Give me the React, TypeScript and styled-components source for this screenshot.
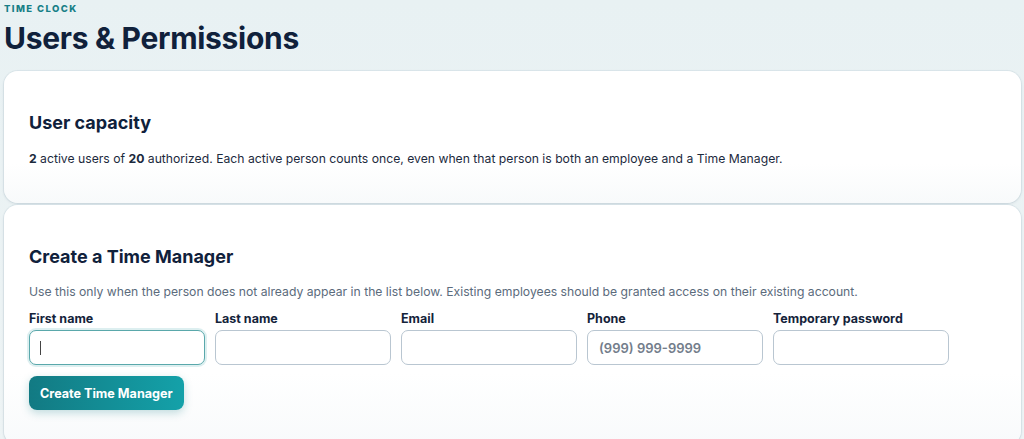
import React from 'react';
import styled, { createGlobalStyle } from 'styled-components';

const GlobalStyle = createGlobalStyle`
  html, body {
    margin: 0;
    padding: 0;
  }
  body {
    font-family: Inter, "Noto Sans", sans-serif;
    background: linear-gradient(180deg, #e8f1f3 0%, #eef4f5 100%);
    color: #0f1f3a;
    min-height: 439px;
    overflow: hidden;
  }
`;

const Page = styled.div`
  display: flex;
  flex-direction: column;
  padding: 3px 3px 0 4px;
`;

const Header = styled.header`
  display: flex;
  flex-direction: column;
  margin-bottom: 14px;
`;

const Eyebrow = styled.div`
  font-size: 9.5px;
  font-weight: 800;
  letter-spacing: 1.4px;
  color: #177f87;
  line-height: 12px;
`;

const Title = styled.h1`
  margin: 4px 0 0;
  font-size: 30px;
  font-weight: 700;
  letter-spacing: -0.3px;
  line-height: 38px;
  color: #10213b;
`;

const Card = styled.section`
  background: linear-gradient(180deg, #ffffff 70%, #f8fafb 100%);
  border-radius: 14px;
  box-shadow: 0 1px 3px rgba(30, 60, 80, 0.12), 0 0 0 1px rgba(210, 224, 230, 0.5);
  padding: 40px 25px 35px;
  margin-bottom: 2px;
`;

const CardTitle = styled.h2<{ $gap: number }>`
  margin: 0 0 ${(p) => p.$gap}px;
  font-size: 18px;
  font-weight: 700;
  line-height: 24px;
  color: #10213b;
`;

const Text = styled.p<{ $muted?: boolean }>`
  margin: 0;
  font-size: 12.2px;
  line-height: 18px;
  color: ${(p) => (p.$muted ? '#5b6b7c' : '#1c2a3d')};
`;

const Form = styled.div`
  display: flex;
  flex-direction: column;
  gap: 11px;
  margin-top: 11px;
`;

const Fields = styled.div`
  display: flex;
  gap: 10px;
`;

const Field = styled.label`
  display: flex;
  flex-direction: column;
  gap: 4px;
  width: 176px;
`;

const Label = styled.span`
  font-size: 12.5px;
  font-weight: 700;
  color: #14233a;
  line-height: 14px;
`;

const InputWrap = styled.div`
  position: relative;
`;

const Input = styled.input<{ $focus?: boolean }>`
  box-sizing: border-box;
  height: 35px;
  width: 100%;
  border-radius: 7px;
  border: 1px solid ${(p) => (p.$focus ? '#5aa8ab' : '#b9c6d1')};
  box-shadow: ${(p) => (p.$focus ? '0 0 0 2px rgba(120, 190, 195, 0.25)' : 'none')};
  padding: 0 11px;
  font-family: Inter, sans-serif;
  font-size: 13px;
  font-weight: 600;
  color: #1c2a3d;
  background: #fff;
  outline: none;
  &::placeholder {
    color: #737d8b;
  }
`;

const CaretLine = styled.span`
  position: absolute;
  left: 11px;
  top: 11px;
  width: 1px;
  height: 14px;
  background: #444;
`;

const Button = styled.button`
  align-self: flex-start;
  height: 34px;
  padding: 0 11px;
  border: none;
  border-radius: 8px;
  background: linear-gradient(90deg, #127a83 0%, #14a1a9 100%);
  color: #fff;
  font-family: Inter, sans-serif;
  font-size: 12.6px;
  font-weight: 700;
  box-shadow: 0 3px 8px rgba(18, 122, 131, 0.25);
  cursor: pointer;
`;

const fields = [
  { label: 'First name', focus: true },
  { label: 'Last name' },
  { label: 'Email' },
  { label: 'Phone', placeholder: '(999) 999-9999' },
  { label: 'Temporary password' },
];

export default function App() {
  return (
    <>
      <GlobalStyle />
      <Page>
        <Header>
          <Eyebrow>TIME CLOCK</Eyebrow>
          <Title>Users &amp; Permissions</Title>
        </Header>
        <Card>
          <CardTitle $gap={15}>User capacity</CardTitle>
          <Text>
            <b>2</b> active users of <b>20</b> authorized. Each active person counts once, even
            when that person is both an employee and a Time Manager.
          </Text>
        </Card>
        <Card>
          <CardTitle $gap={14}>Create a Time Manager</CardTitle>
          <Text $muted>
            Use this only when the person does not already appear in the list below. Existing
            employees should be granted access on their existing account.
          </Text>
          <Form>
            <Fields>
              {fields.map((f) => (
                <Field key={f.label}>
                  <Label>{f.label}</Label>
                  <InputWrap>
                    <Input $focus={f.focus} placeholder={f.placeholder} />
                    {f.focus && <CaretLine />}
                  </InputWrap>
                </Field>
              ))}
            </Fields>
            <Button type="button">Create Time Manager</Button>
          </Form>
        </Card>
      </Page>
    </>
  );
}
